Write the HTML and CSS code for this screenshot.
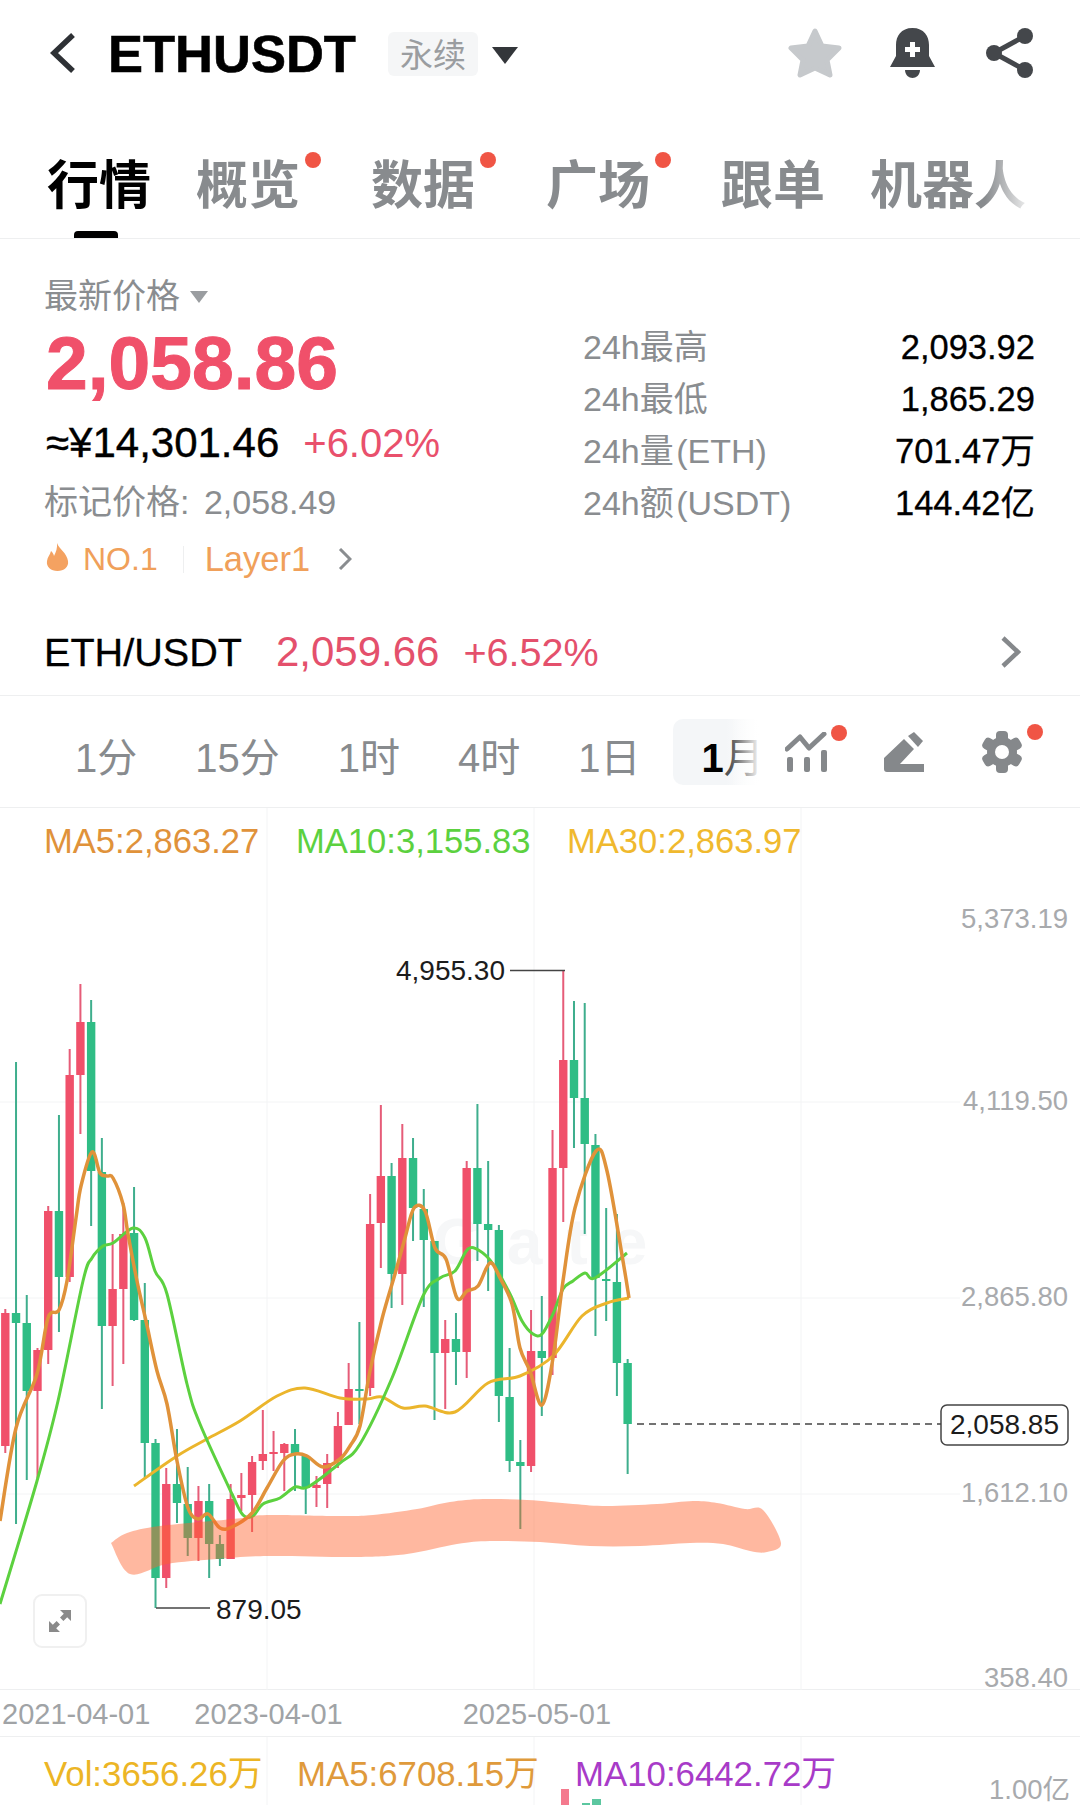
FILE: index.html
```html
<!DOCTYPE html>
<html lang="zh-CN">
<head>
  <meta charset="UTF-8" />
  <meta name="viewport" content="width=device-width, initial-scale=1.0" />
  <title>ETHUSDT</title>
  <link rel="stylesheet" href="styles.css">
</head>
<body>
  <header class="topbar">
    <svg class="back" viewBox="0 0 26 42"><polyline points="23,3 4,21 23,39"/></svg>
    <h1 class="symbol">ETHUSDT</h1>
    <span class="tag">永续</span>
    <span class="caret"></span>
    <div class="actions">
      <svg class="star" viewBox="0 0 54 50"><polygon points="27,3 34,18 51,20 39,32 42,47 27,40 12,47 15,32 3,20 20,18"/></svg>
      <svg class="bell" viewBox="0 0 45 50">
        <path d="M22.5 0C11 0 6 8 6 17V28L0 39H45L39 28V17C39 8 34 0 22.5 0Z"/>
        <path d="M15 42H30C30 47 26 50 22.5 50C19 50 15 47 15 42Z"/>
        <path class="plus" d="M20 14H25V19H30V24H25V29H20V24H15V19H20Z"/>
      </svg>
      <svg class="share" viewBox="0 0 47 50">
        <line x1="8" y1="25" x2="39" y2="8"/>
        <line x1="8" y1="25" x2="39" y2="42"/>
        <circle cx="8" cy="25" r="8"/>
        <circle cx="39" cy="8" r="8"/>
        <circle cx="39" cy="42" r="8"/>
      </svg>
    </div>
  </header>

  <nav class="tabs">
    <span class="tab active">行情</span>
    <span class="tab dotted">概览</span>
    <span class="tab dotted">数据</span>
    <span class="tab dotted">广场</span>
    <span class="tab">跟单</span>
    <span class="tab">机器人</span>
  </nav>

  <section class="summary">
    <div class="price-col">
      <div class="price-label">最新价格<span class="caret small"></span></div>
      <div class="last-price">2,058.86</div>
      <div class="cny">≈¥14,301.46<span class="change">+6.02%</span></div>
      <div class="mark">标记价格: 2,058.49</div>
      <div class="badges">
        <svg class="flame" viewBox="0 0 23 28"><path d="M11 0C13 6 21 10 22 18C23 24 18 28 11.500 28C5 28 0 24 1 18C1.500 14 4 12 5 8C6.500 9 7.500 11 8 13C10 9 11.500 5 11 0Z"/></svg>
        <span>NO.1</span>
        <i class="divider"></i>
        <span class="sector">Layer1</span>
        <svg class="more" viewBox="0 0 14 22"><polyline points="2,1 12,11 2,21"/></svg>
      </div>
    </div>
    <div class="stats">
      <div class="stat"><span>24h最高</span><b>2,093.92</b></div>
      <div class="stat"><span>24h最低</span><b>1,865.29</b></div>
      <div class="stat"><span>24h量 (ETH)</span><b>701.47万</b></div>
      <div class="stat"><span>24h额 (USDT)</span><b>144.42亿</b></div>
    </div>
  </section>

  <section class="spot">
    <span class="spot-name">ETH/USDT</span>
    <span class="spot-price">2,059.66</span>
    <span class="spot-change">+6.52%</span>
    <svg class="spot-more" viewBox="0 0 21 32"><polyline points="3,2 18,16 3,30"/></svg>
  </section>

  <section class="periods">
    <span class="period">1分</span>
    <span class="period">15分</span>
    <span class="period">1时</span>
    <span class="period">4时</span>
    <span class="period">1日</span>
    <span class="period current"><b>1</b>月</span>
    <span class="tool tool-ind">
      <svg viewBox="0 0 44 40">
        <polyline class="stroke" points="2,17 15,5 24,16 39,2"/>
        <rect x="2" y="25" width="6" height="15" rx="2"/>
        <rect x="19" y="25" width="6" height="15" rx="2"/>
        <rect x="36" y="18" width="6" height="22" rx="2"/>
      </svg>
      <i class="dot"></i>
    </span>
    <span class="tool tool-pen">
      <svg viewBox="0 0 41 41">
        <path d="M0 27L20 8L30 18L16 33H40V41H3C1 41 0 40 0 38Z"/>
        <path d="M24 5L30 1L39 10L34 16Z"/>
      </svg>
    </span>
    <span class="tool tool-gear">
      <svg viewBox="0 0 40 44">
        <g transform="translate(20 22)">
          <path class="gear" fill-rule="evenodd" d="M0 -15A15 15 0 1 1 0 15A15 15 0 1 1 0 -15ZM0 -7A7 7 0 1 0 0 7A7 7 0 1 0 0 -7Z"/>
          <rect x="-6" y="-21" width="12" height="42" rx="4"/>
          <rect x="-6" y="-21" width="12" height="42" rx="4" transform="rotate(60)"/>
          <rect x="-6" y="-21" width="12" height="42" rx="4" transform="rotate(120)"/>
          <circle class="hole" r="7"/>
        </g>
      </svg>
      <i class="dot"></i>
    </span>
  </section>

  <section class="chart">
    <svg id="kline" class="kline" viewBox="0 807 1080 882"></svg>
    <div class="ma-row">
      <span class="ma5">MA5:2,863.27</span>
      <span class="ma10">MA10:3,155.83</span>
      <span class="ma30">MA30:2,863.97</span>
    </div>
    <button class="expand">
      <svg viewBox="0 0 26 26">
        <path d="M13 0H26V13L21.500 8.500L17 13L13 9L17.500 4.500Z"/>
        <path d="M0 13L4.500 17.500L9 13L13 17L8.500 21.500L13 26H0Z"/>
      </svg>
    </button>
  </section>

  <div class="dates">
    <span>2021-04-01</span>
    <span>2023-04-01</span>
    <span>2025-05-01</span>
  </div>

  <section class="volume">
    <svg class="vol-bars" viewBox="0 0 1080 69">
      <line x1="267" y1="0" x2="267" y2="69"/>
      <line x1="534" y1="0" x2="534" y2="69"/>
      <line x1="801" y1="0" x2="801" y2="69"/>
      <rect class="bar-up" x="561" y="52" width="8" height="17"/>
      <rect class="bar-down" x="582" y="66" width="8" height="3"/>
      <rect class="bar-down" x="592" y="62" width="9" height="7"/>
    </svg>
    <span class="vol">Vol:3656.26万</span>
    <span class="vol-ma5">MA5:6708.15万</span>
    <span class="vol-ma10">MA10:6442.72万</span>
    <span class="vol-scale">1.00亿</span>
  </section>

  <script src="chart.js"></script>
</body>
</html>
```

FILE: styles.css
```css
* {
  box-sizing: border-box;
}

html, body {
  margin: 0;
  height: 1805px;
  overflow: hidden;
  background-color: white;
}

body {
  font-family: "Liberation Sans", "Noto Sans CJK SC", sans-serif;
  color: black;
}

svg {
  display: block;
}

.caret {
  width: 0;
  height: 0;
  margin-left: 14px;
  margin-top: 4px;
  border-left: 13px solid transparent;
  border-right: 13px solid transparent;
  border-top: 17px solid #33363a;
}

.caret.small {
  display: inline-block;
  margin-left: 10px;
  margin-top: 0;
  vertical-align: 5px;
  border-left-width: 9px;
  border-right-width: 9px;
  border-top: 12px solid #9a9da0;
}

/* top bar */
.topbar {
  display: flex;
  align-items: center;
  height: 106px;
  padding: 0 47px 0 50px;
}

.back {
  width: 26px;
  height: 42px;
  fill: none;
  stroke: #2e3135;
  stroke-width: 5.5;
}

.symbol {
  margin: 2px 0 0 32px;
  font-size: 52.5px;
  font-weight: bold;
  line-height: 1;
  -webkit-text-stroke: 0.6px black;
}

.tag {
  margin: 2px 0 0 32px;
  padding: 0 12px;
  height: 44px;
  line-height: 48px;
  font-size: 33px;
  color: #9a9da0;
  background-color: #f5f6f7;
  border-radius: 6px;
}

.actions {
  display: flex;
  align-items: center;
  margin-left: auto;
}

.star {
  width: 54px;
  height: 50px;
  fill: #c6c9cc;
  stroke: #c6c9cc;
  stroke-width: 5;
  stroke-linejoin: round;
}

.bell {
  width: 45px;
  height: 50px;
  margin-left: 48px;
  fill: #44474b;
}

.bell .plus {
  fill: white;
}

.share {
  width: 47px;
  height: 50px;
  margin-left: 51px;
  fill: #44474b;
  stroke: #44474b;
  stroke-width: 0;
}

.share line {
  stroke-width: 5;
}

/* tabs */
.tabs {
  position: relative;
  display: flex;
  gap: 45px;
  height: 133px;
  padding: 50px 0 0 47px;
  border-bottom: 1px solid #eeeff0;
  font-size: 52px;
  line-height: 60px;
  font-weight: bold;
  color: #888b8e;
}

.tabs::after {
  content: "";
  position: absolute;
  top: 40px;
  left: 985px;
  width: 50px;
  height: 80px;
  background: linear-gradient(to right, rgba(255, 255, 255, 0), white);
}

.tab {
  position: relative;
  height: 82px;
}

.tab.active {
  color: black;
}

.tab.active::after {
  content: "";
  position: absolute;
  left: 27px;
  bottom: 0;
  width: 44px;
  height: 7px;
  background-color: black;
  border-radius: 4px 4px 0 0;
}

.tab.dotted {
  margin-right: 26px;
}

.tab.dotted::after {
  content: "";
  position: absolute;
  top: -4px;
  right: -21px;
  width: 16px;
  height: 16px;
  background-color: #f05545;
  border-radius: 50%;
}

/* price summary */
.summary {
  display: flex;
  justify-content: space-between;
  height: 370px;
  padding: 37px 45px 0 44px;
}

.price-label {
  line-height: 40px;
  font-size: 34px;
  color: #8a8d90;
}

.last-price {
  margin-top: 7px;
  line-height: 80px;
  font-size: 75px;
  font-weight: bold;
  color: #f0506a;
  padding-left: 2px;
  -webkit-text-stroke: 1px #f0506a;
}

.cny {
  margin-top: 15px;
  line-height: 50px;
  font-size: 42px;
  padding-left: 2px;
  -webkit-text-stroke: 0.4px black;
}

.change {
  margin-left: 24px;
  font-size: 40px;
  color: #e9506c;
  -webkit-text-stroke: 0;
}

.mark {
  margin-top: 14px;
  line-height: 40px;
  font-size: 34px;
  word-spacing: 5px;
  color: #8a8d90;
}

.badges {
  display: flex;
  align-items: center;
  margin-top: 17px;
  padding-left: 2px;
  height: 40px;
  font-size: 32px;
  color: #f0a05a;
}

.sector {
  font-size: 34.5px;
}

.flame {
  width: 23px;
  height: 28px;
  fill: #f4a261;
  margin: -4px 14px 0 0;
}

.divider {
  width: 1px;
  height: 27px;
  margin: 0 21px 0 25px;
  background-color: #eeeff0;
}

.more {
  width: 14px;
  height: 22px;
  margin-left: 28px;
  fill: none;
  stroke: #8a8d90;
  stroke-width: 3;
}

.stats {
  width: 452px;
  margin-top: 45px;
}

.stat {
  display: flex;
  justify-content: space-between;
  height: 52px;
  line-height: 52px;
  font-size: 34px;
  word-spacing: -7px;
  color: #8a8d90;
}

.stat b {
  font-weight: normal;
  font-size: 34.5px;
  color: black;
  -webkit-text-stroke: 0.3px black;
}

/* spot row */
.spot {
  display: flex;
  align-items: center;
  height: 87px;
  padding: 0 59px 0 44px;
  border-bottom: 1px solid #eeeff0;
  font-size: 39.6px;
}

.spot-name {
  -webkit-text-stroke: 0.3px black;
}

.spot-price {
  margin-left: 34px;
  font-size: 42px;
  color: #e4506c;
}

.spot-change {
  margin-left: 24px;
  color: #e4506c;
}

.spot-more {
  width: 21px;
  height: 32px;
  margin-left: auto;
  fill: none;
  stroke: #85888b;
  stroke-width: 4.5;
}

/* periods and tools */
.periods {
  display: flex;
  align-items: center;
  height: 112px;
  padding-left: 46px;
  border-bottom: 1px solid #eeeff0;
  font-size: 40px;
  color: #888b8e;
}

.period {
  height: 66px;
  padding: 12px 29px 0;
  line-height: 54px;
  white-space: nowrap;
}

.period.current {
  position: relative;
  width: 88px;
  margin-left: 3px;
  padding-right: 0;
  color: #555;
  background: linear-gradient(to right, #f4f6f8 60%, white);
  border-radius: 10px 0 0 10px;
}

.period.current b {
  color: black;
  font-weight: bold;
}

.period.current::after {
  content: "";
  position: absolute;
  top: 0;
  right: 0;
  width: 30px;
  height: 66px;
  background: linear-gradient(to right, rgba(255, 255, 255, 0), white);
}

.tool {
  position: relative;
  fill: #85888b;
}

.tool svg {
  width: 100%;
  height: 100%;
}

.tool-ind {
  width: 44px;
  height: 40px;
  margin-left: 24.5px;
}

.tool-ind .stroke {
  fill: none;
  stroke: #85888b;
  stroke-width: 5;
  stroke-linejoin: round;
  stroke-linecap: round;
}

.tool-pen {
  width: 41px;
  height: 41px;
  margin-left: 55px;
}

.tool-gear {
  width: 40px;
  height: 44px;
  margin-left: 57px;
}

.hole {
  fill: white;
}

.dot {
  position: absolute;
  top: -7px;
  right: -18px;
  width: 16px;
  height: 16px;
  background-color: #f05545;
  border-radius: 50%;
}

.tool-gear .dot {
  top: -6px;
  right: -21px;
}

/* chart */
.chart {
  position: relative;
  height: 882px;
  border-bottom: 1px solid #eeeff0;
}

.kline {
  position: absolute;
  top: 0;
  left: 0;
  width: 1080px;
  height: 882px;
  overflow: visible;
}

.grid {
  stroke: #f3f4f5;
  stroke-width: 1;
}

.candle-up {
  fill: #f0506a;
}

.candle-down {
  fill: #2fbd85;
}

.wick-up {
  fill: #e65c78;
}

.wick-down {
  fill: #3fae8d;
}

.line {
  fill: none;
  stroke-width: 3;
  stroke-linejoin: round;
}

.line-ma5 {
  stroke: #e0923a;
  stroke-width: 3.5;
}

.line-ma10 {
  stroke: #5cd13f;
}

.line-ma30 {
  stroke: #ebb52c;
}

.highlight {
  fill: rgba(255, 98, 44, 0.45);
}

.watermark {
  font-size: 64px;
  font-weight: bold;
  letter-spacing: 24px;
  fill: #f6f7f8;
}

.axis-label {
  font-size: 27.5px;
  fill: #a8aaad;
  text-anchor: end;
}

.extreme {
  font-size: 28px;
  fill: #1c1c1c;
}

.leader {
  stroke: #444;
  stroke-width: 1.5;
}

.last-line {
  stroke: #444;
  stroke-width: 1.5;
  stroke-dasharray: 7 5;
}

.last-box {
  fill: white;
  stroke: #444;
  stroke-width: 1.5;
}

.ma-row {
  position: relative;
  display: flex;
  height: 66px;
  padding-left: 44px;
  font-size: 34.6px;
  line-height: 66px;
}

.ma5 {
  width: 252px;
  color: #e0923a;
}

.ma10 {
  width: 271px;
  color: #5cd13f;
}

.ma30 {
  color: #f0b92e;
}

.expand {
  position: absolute;
  top: 786px;
  left: 33px;
  width: 54px;
  height: 54px;
  padding: 13px 14px;
  background-color: white;
  border: 2px solid #f0f0f0;
  border-radius: 9px;
}

.expand svg {
  fill: #8a8a8a;
}

/* dates */
.dates {
  position: relative;
  height: 47px;
  border-bottom: 1px solid #eeeff0;
  font-size: 29px;
  line-height: 48px;
  color: #a0a3a6;
  display: flex;
  padding-left: 2px;
  gap: 44px;
}

.dates span:last-child {
  margin-left: 76px;
}

/* volume */
.volume {
  position: relative;
  display: flex;
  height: 69px;
  padding-left: 44px;
  font-size: 34.8px;
  line-height: 73px;
}

.vol-bars {
  position: absolute;
  top: 0;
  left: 0;
  width: 1080px;
  height: 69px;
}

.vol-bars line {
  stroke: #f3f4f5;
}

.bar-up {
  fill: #f47a8e;
}

.bar-down {
  fill: #5cc7a0;
}

.vol,
.vol-ma5,
.vol-ma10,
.vol-scale {
  position: relative;
}

.vol {
  width: 253px;
  color: #ecb525;
}

.vol-ma5 {
  width: 278px;
  color: #df9a3b;
}

.vol-ma10 {
  color: #a83bc8;
}

.vol-scale {
  margin-left: auto;
  margin-right: 10px;
  padding-top: 16px;
  font-size: 27.5px;
  color: #a8aaad;
}
```

FILE: chart.js
```js
// [kind, bodyTop, bodyBottom, wickTop, wickBottom], one per month, kind u = red, d = green
const candles = [
  ['u', 1312, 1445, 1308, 1452], ['d', 1312, 1322, 1061, 1523], ['d', 1322, 1390, 1294, 1479],
  ['u', 1349, 1390, 1347, 1477], ['u', 1210, 1349, 1205, 1363], ['d', 1210, 1276, 1114, 1331],
  ['u', 1074, 1276, 1048, 1281], ['u', 1021, 1074, 983, 1133], ['d', 1021, 1170, 999, 1225],
  ['d', 1171, 1325, 1137, 1408], ['u', 1288, 1325, 1233, 1385], ['u', 1233, 1288, 1202, 1363],
  ['d', 1232, 1319, 1186, 1320], ['d', 1319, 1442, 1282, 1478], ['d', 1442, 1577, 1438, 1607],
  ['u', 1483, 1577, 1467, 1587], ['d', 1483, 1502, 1428, 1522], ['d', 1503, 1537, 1466, 1555],
  ['u', 1500, 1537, 1485, 1560], ['d', 1500, 1543, 1483, 1577], ['d', 1543, 1558, 1534, 1565],
  ['u', 1498, 1558, 1483, 1558], ['u', 1494, 1497, 1472, 1510], ['u', 1461, 1494, 1455, 1531],
  ['u', 1453, 1460, 1409, 1469], ['u', 1451, 1453, 1430, 1470], ['u', 1443, 1452, 1442, 1490],
  ['d', 1443, 1454, 1428, 1490], ['d', 1455, 1487, 1453, 1513], ['u', 1484, 1487, 1475, 1506],
  ['u', 1462, 1483, 1453, 1507], ['u', 1425, 1460, 1411, 1467], ['u', 1388, 1424, 1362, 1424],
  ['d', 1388, 1390, 1321, 1423], ['u', 1223, 1387, 1193, 1395], ['u', 1175, 1222, 1104, 1267],
  ['d', 1175, 1273, 1162, 1307], ['u', 1157, 1273, 1123, 1304], ['d', 1157, 1207, 1137, 1240],
  ['d', 1208, 1239, 1188, 1306], ['d', 1240, 1352, 1240, 1419], ['u', 1338, 1352, 1319, 1408],
  ['d', 1338, 1351, 1312, 1384], ['u', 1167, 1351, 1160, 1377], ['d', 1167, 1223, 1103, 1260],
  ['d', 1223, 1229, 1160, 1290], ['d', 1229, 1395, 1224, 1421], ['d', 1396, 1460, 1347, 1471],
  ['d', 1461, 1465, 1439, 1528], ['u', 1350, 1465, 1309, 1471], ['d', 1350, 1357, 1295, 1415],
  ['u', 1167, 1357, 1129, 1374], ['u', 1059, 1167, 970, 1221], ['d', 1059, 1097, 1000, 1147],
  ['d', 1097, 1143, 1002, 1233], ['d', 1144, 1277, 1133, 1335], ['d', 1278, 1280, 1207, 1320],
  ['d', 1281, 1362, 1213, 1395], ['d', 1362, 1423, 1358, 1473]
];

const ma5 = [[0,1520],[16,1427],[37,1373],[48,1317],[59,1309],[67,1280],[76,1217],[81,1185],[92,1151],[100,1172],[107,1175],[113,1177],[123,1203],[128,1233],[137,1280],[146,1320],[157,1370],[167,1403],[177,1460],[188,1507],[198,1518],[208,1513],[220,1527],[232,1526],[252,1512],[267,1487],[283,1460],[295,1453],[307,1455],[323,1466],[340,1458],[350,1445],[360,1425],[370,1370],[382,1318],[395,1273],[405,1237],[414,1207],[425,1210],[435,1247],[446,1258],[457,1297],[467,1290],[478,1285],[490,1262],[500,1277],[512,1303],[520,1347],[530,1370],[542,1404],[553,1357],[563,1280],[575,1207],[596,1150],[607,1170],[623,1260],[629,1297]];
const ma10 = [[0,1603],[37,1480],[58,1400],[83,1280],[92,1257],[103,1245],[113,1242],[133,1227],[145,1237],[155,1270],[167,1293],[187,1383],[200,1423],[232,1493],[243,1514],[253,1515],[263,1503],[280,1497],[295,1486],[308,1486],[340,1462],[360,1443],[392,1377],[423,1295],[440,1277],[455,1270],[468,1248],[480,1250],[493,1263],[510,1293],[522,1320],[533,1333],[542,1333],[553,1313],[563,1288],[573,1280],[585,1272],[595,1277],[627,1252]];
const ma30 = [[134,1485],[177,1455],[207,1438],[240,1420],[277,1395],[305,1387],[340,1397],[367,1398],[382,1396],[403,1407],[425,1405],[455,1411],[488,1382],[520,1375],[553,1355],[582,1315],[607,1302],[629,1297]];
const highlight = [[111,1542],[127,1532],[160,1525],[233,1518],[267,1514],[340,1515],[373,1514],[417,1508],[450,1501],[483,1498],[527,1499],[573,1503],[607,1505],[657,1503],[693,1500],[717,1502],[745,1508],[763,1509],[781,1542],[767,1551],[750,1550],[723,1543],[690,1542],[640,1545],[590,1545],[540,1541],[490,1540],[457,1543],[407,1553],[357,1556],[267,1555],[217,1558],[167,1563],[130,1573],[111,1542]];

const prices = [['5,373.19', 918], ['4,119.50', 1100], ['2,865.80', 1296], ['1,612.10', 1492], ['358.40', 1677]];

// catmull-rom through the points so the averages don't look like polylines
function smoothPath(pts) {
  let d = 'M' + pts[0][0] + ' ' + pts[0][1];
  for (let i = 0; i < pts.length - 1; i++) {
    const p0 = pts[i - 1] || pts[i];
    const p1 = pts[i];
    const p2 = pts[i + 1];
    const p3 = pts[i + 2] || p2;
    const c1x = p1[0] + (p2[0] - p0[0]) / 6;
    const c1y = p1[1] + (p2[1] - p0[1]) / 6;
    const c2x = p2[0] - (p3[0] - p1[0]) / 6;
    const c2y = p2[1] - (p3[1] - p1[1]) / 6;
    d += 'C' + c1x + ' ' + c1y + ' ' + c2x + ' ' + c2y + ' ' + p2[0] + ' ' + p2[1];
  }
  return d;
}

let html = '';

[1101, 1297, 1493].forEach(function (y) {
  html += '<line class="grid" x1="0" y1="' + y + '" x2="960" y2="' + y + '"/>';
});
[267, 534, 801].forEach(function (x) {
  html += '<line class="grid" x1="' + x + '" y1="807" x2="' + x + '" y2="1689"/>';
});

html += '<text class="watermark" x="433" y="1263">Gate</text>';

candles.forEach(function (c, i) {
  const x = 5.3 + i * 10.73;
  const kind = c[0] === 'u' ? 'up' : 'down';
  html += '<rect class="wick-' + kind + '" x="' + (x - 1) + '" y="' + c[3] + '" width="2" height="' + (c[4] - c[3]) + '"/>';
  html += '<rect class="candle-' + kind + '" x="' + (x - 4.2) + '" y="' + c[1] + '" width="8.4" height="' + (c[2] - c[1]) + '"/>';
});

html += '<path class="line line-ma30" d="' + smoothPath(ma30) + '"/>';
html += '<path class="line line-ma10" d="' + smoothPath(ma10) + '"/>';
html += '<path class="line line-ma5" d="' + smoothPath(ma5) + '"/>';
html += '<path class="highlight" d="' + smoothPath(highlight) + 'Z"/>';

prices.forEach(function (p) {
  html += '<text class="axis-label" x="1068" y="' + (p[1] + 9) + '">' + p[0] + '</text>';
});

// high and low markers
html += '<text class="extreme" x="396" y="979">4,955.30</text>';
html += '<line class="leader" x1="510" y1="969.500" x2="565" y2="969.500"/>';
html += '<text class="extreme" x="216" y="1618">879.05</text>';
html += '<line class="leader" x1="156" y1="1607" x2="210" y2="1607"/>';

// last price tag
html += '<line class="last-line" x1="637" y1="1423" x2="941" y2="1423"/>';
html += '<rect class="last-box" x="941" y="1404" width="127" height="40" rx="6"/>';
html += '<text class="extreme" x="950" y="1433">2,058.85</text>';

document.getElementById('kline').innerHTML = html;
```
